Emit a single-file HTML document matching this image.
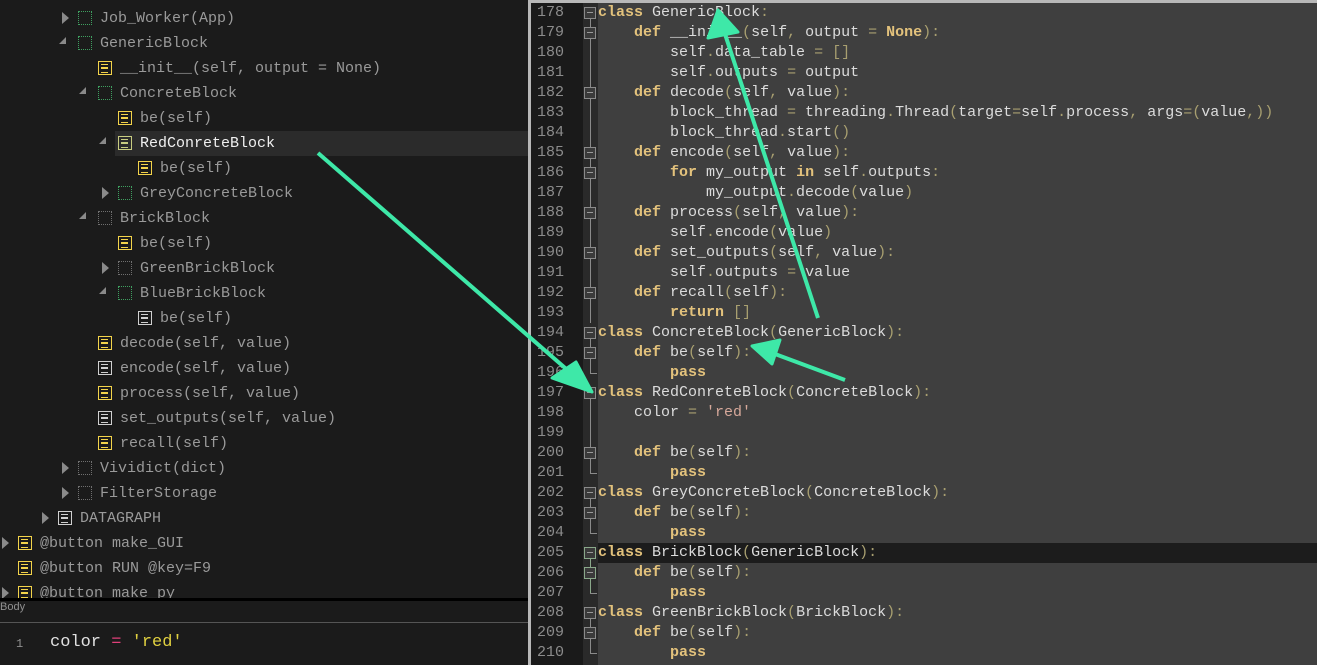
<!DOCTYPE html>
<html><head><meta charset="utf-8"><style>
*{margin:0;padding:0;box-sizing:border-box}
body{width:1317px;height:665px;overflow:hidden;background:#1b1b1b;position:relative;font-family:"Liberation Mono",monospace}
.left{position:absolute;left:0;top:0;width:528px;height:599px;background:#1b1b1b;overflow:hidden}
.row{position:absolute;height:25px;line-height:25px;font-size:15px;color:#9a9a9a;white-space:pre}
.sel{position:absolute;left:115px;top:131px;width:413px;height:25px;background:#2b2b2b}
.ic{position:absolute;width:14px;height:14px;margin:-1px 0 0 -1px}
.y,.o,.w{border:1.5px solid var(--c)}
.y{--c:#f2d34a}.o{--c:#c8cc80}.w{--c:#d0d0d0}
.y::before,.o::before,.w::before{content:"";position:absolute;left:2px;top:2px;width:7px;height:7px;border-top:1.5px solid var(--c);border-bottom:1.5px solid var(--c)}
.y::after,.o::after,.w::after{content:"";position:absolute;left:2px;top:5px;width:7px;height:1.5px;background:var(--c)}
.g{border:1px dotted #3fa060}
.d{border:1px dotted #707070}
.tr{position:absolute;width:0;height:0;border-top:6px solid transparent;border-bottom:6px solid transparent;border-left:7px solid #8a8a8a}
.td{position:absolute;width:0;height:0;border-left:7px solid transparent;border-bottom:7px solid #8a8a8a}
.code{position:absolute;left:531px;top:2px;width:786px;height:663px;background:#3f3f3f}
.topb{position:absolute;left:528px;top:0;width:789px;height:3px;background:#b8b8b8}
.lb{position:absolute;left:528px;top:0;width:3px;height:665px;background:#b8b8b8}
.nums{position:absolute;left:531px;top:2px;width:52px;height:663px;background:#1a1a1a}
.gut{position:absolute;left:583px;top:2px;width:15px;height:663px;background:#2a2a2a}
.ln{position:absolute;left:537px;font-size:15px;color:#8c8c8c;height:20px;line-height:20px}
.cl{position:absolute;left:598px;font-size:15px;color:#dcdcdc;height:20px;line-height:20px;white-space:pre}
.k{color:#e3c27c;font-weight:bold}
.p{color:#a89f70}
.s{color:#d6a89a}
.fb{position:absolute;left:584px;width:12px;height:12px;border:1px solid #8a8a8a;background:#3a3a3a}
.fb::after{content:"";position:absolute;left:2px;top:4px;width:6px;height:1px;background:#9a9a9a}
.fl{position:absolute;left:590px;width:1px;background:#8a8a8a}
.fe{position:absolute;left:590px;width:7px;height:1px;background:#8a8a8a}
</style></head><body>
<div class="left">
<div class="sel"></div>
<div class="tr" style="left:62px;top:12px"></div><div class="ic g" style="left:79px;top:12px"></div><div class="row" style="left:100px;top:6px">Job_Worker(App)</div>
<div class="td" style="left:59px;top:37px"></div><div class="ic g" style="left:79px;top:37px"></div><div class="row" style="left:100px;top:31px">GenericBlock</div>
<div class="ic y" style="left:99px;top:62px"></div><div class="row" style="left:120px;top:56px">__init__(self, output = None)</div>
<div class="td" style="left:79px;top:87px"></div><div class="ic g" style="left:99px;top:87px"></div><div class="row" style="left:120px;top:81px">ConcreteBlock</div>
<div class="ic y" style="left:119px;top:112px"></div><div class="row" style="left:140px;top:106px">be(self)</div>
<div class="td" style="left:99px;top:137px"></div><div class="ic o" style="left:119px;top:137px"></div><div class="row" style="left:140px;top:131px;color:#f0f0f0">RedConreteBlock</div>
<div class="ic y" style="left:139px;top:162px"></div><div class="row" style="left:160px;top:156px">be(self)</div>
<div class="tr" style="left:102px;top:187px"></div><div class="ic g" style="left:119px;top:187px"></div><div class="row" style="left:140px;top:181px">GreyConcreteBlock</div>
<div class="td" style="left:79px;top:212px"></div><div class="ic d" style="left:99px;top:212px"></div><div class="row" style="left:120px;top:206px">BrickBlock</div>
<div class="ic y" style="left:119px;top:237px"></div><div class="row" style="left:140px;top:231px">be(self)</div>
<div class="tr" style="left:102px;top:262px"></div><div class="ic d" style="left:119px;top:262px"></div><div class="row" style="left:140px;top:256px">GreenBrickBlock</div>
<div class="td" style="left:99px;top:287px"></div><div class="ic g" style="left:119px;top:287px"></div><div class="row" style="left:140px;top:281px">BlueBrickBlock</div>
<div class="ic w" style="left:139px;top:312px"></div><div class="row" style="left:160px;top:306px">be(self)</div>
<div class="ic y" style="left:99px;top:337px"></div><div class="row" style="left:120px;top:331px">decode(self, value)</div>
<div class="ic w" style="left:99px;top:362px"></div><div class="row" style="left:120px;top:356px">encode(self, value)</div>
<div class="ic y" style="left:99px;top:387px"></div><div class="row" style="left:120px;top:381px">process(self, value)</div>
<div class="ic w" style="left:99px;top:412px"></div><div class="row" style="left:120px;top:406px">set_outputs(self, value)</div>
<div class="ic y" style="left:99px;top:437px"></div><div class="row" style="left:120px;top:431px">recall(self)</div>
<div class="tr" style="left:62px;top:462px"></div><div class="ic d" style="left:79px;top:462px"></div><div class="row" style="left:100px;top:456px">Vividict(dict)</div>
<div class="tr" style="left:62px;top:487px"></div><div class="ic d" style="left:79px;top:487px"></div><div class="row" style="left:100px;top:481px">FilterStorage</div>
<div class="tr" style="left:42px;top:512px"></div><div class="ic w" style="left:59px;top:512px"></div><div class="row" style="left:80px;top:506px">DATAGRAPH</div>
<div class="tr" style="left:2px;top:537px"></div><div class="ic y" style="left:19px;top:537px"></div><div class="row" style="left:40px;top:531px">@button make_GUI</div>
<div class="ic y" style="left:19px;top:562px"></div><div class="row" style="left:40px;top:556px">@button RUN @key=F9</div>
<div class="tr" style="left:2px;top:587px"></div><div class="ic y" style="left:19px;top:587px"></div><div class="row" style="left:40px;top:581px">@button make_py</div>
</div>
<div style="position:absolute;left:0;top:598px;width:528px;height:3px;background:#000"></div>
<div style="position:absolute;left:0;top:601px;font-family:'Liberation Sans',sans-serif;font-size:11px;color:#909090">Body</div>
<div style="position:absolute;left:0;top:622px;width:528px;height:1px;background:#555"></div>
<div style="position:absolute;left:16px;top:637px;font-size:12px;color:#909090">1</div>
<div style="position:absolute;left:50px;top:633px;font-size:17px;color:#e0e0e0;white-space:pre">color <span style="color:#e0407a">=</span> <span style="color:#e0d040">'red'</span></div>

<div class="code"></div>
<div style="position:absolute;left:598px;top:543px;width:719px;height:20px;background:#1c1c1c"></div>
<div class="nums"></div><div class="gut"></div>
<div class="topb"></div><div class="lb"></div>

<div class="ln" style="top:3px">178</div><div class="ln" style="top:23px">179</div><div class="ln" style="top:43px">180</div><div class="ln" style="top:63px">181</div><div class="ln" style="top:83px">182</div><div class="ln" style="top:103px">183</div><div class="ln" style="top:123px">184</div><div class="ln" style="top:143px">185</div><div class="ln" style="top:163px">186</div><div class="ln" style="top:183px">187</div><div class="ln" style="top:203px">188</div><div class="ln" style="top:223px">189</div><div class="ln" style="top:243px">190</div><div class="ln" style="top:263px">191</div><div class="ln" style="top:283px">192</div><div class="ln" style="top:303px">193</div><div class="ln" style="top:323px">194</div><div class="ln" style="top:343px">195</div><div class="ln" style="top:363px">196</div><div class="ln" style="top:383px">197</div><div class="ln" style="top:403px">198</div><div class="ln" style="top:423px">199</div><div class="ln" style="top:443px">200</div><div class="ln" style="top:463px">201</div><div class="ln" style="top:483px">202</div><div class="ln" style="top:503px">203</div><div class="ln" style="top:523px">204</div><div class="ln" style="top:543px">205</div><div class="ln" style="top:563px">206</div><div class="ln" style="top:583px">207</div><div class="ln" style="top:603px">208</div><div class="ln" style="top:623px">209</div><div class="ln" style="top:643px">210</div>

<div class="fl" style="top:13px;height:310px"></div>
<div class="fl" style="top:333px;height:40px"></div><div class="fe" style="top:373px"></div>
<div class="fl" style="top:393px;height:80px"></div><div class="fe" style="top:473px"></div>
<div class="fl" style="top:493px;height:40px"></div><div class="fe" style="top:533px"></div>
<div class="fl" style="top:553px;height:40px;background:#8aa88a"></div><div class="fe" style="top:593px"></div>
<div class="fl" style="top:613px;height:40px"></div><div class="fe" style="top:653px"></div>
<div class="fb" style="top:7px"></div><div class="fb" style="top:27px"></div><div class="fb" style="top:87px"></div><div class="fb" style="top:147px"></div><div class="fb" style="top:167px"></div><div class="fb" style="top:207px"></div><div class="fb" style="top:247px"></div><div class="fb" style="top:287px"></div><div class="fb" style="top:327px"></div><div class="fb" style="top:347px"></div><div class="fb" style="top:387px"></div><div class="fb" style="top:447px"></div><div class="fb" style="top:487px"></div><div class="fb" style="top:507px"></div><div class="fb" style="top:547px;border-color:#8aa88a"></div><div class="fb" style="top:567px;border-color:#8aa88a"></div><div class="fb" style="top:607px"></div><div class="fb" style="top:627px"></div>

<div class="cl" style="top:3px"><span class="k">class</span> GenericBlock<span class="p">:</span></div>
<div class="cl" style="top:23px">    <span class="k">def</span> __init__<span class="p">(</span>self<span class="p">,</span> output <span class="p">=</span> <span class="k">None</span><span class="p">):</span></div>
<div class="cl" style="top:43px">        self<span class="p">.</span>data_table <span class="p">=</span> <span class="p">[]</span></div>
<div class="cl" style="top:63px">        self<span class="p">.</span>outputs <span class="p">=</span> output</div>
<div class="cl" style="top:83px">    <span class="k">def</span> decode<span class="p">(</span>self<span class="p">,</span> value<span class="p">):</span></div>
<div class="cl" style="top:103px">        block_thread <span class="p">=</span> threading<span class="p">.</span>Thread<span class="p">(</span>target<span class="p">=</span>self<span class="p">.</span>process<span class="p">,</span> args<span class="p">=(</span>value<span class="p">,))</span></div>
<div class="cl" style="top:123px">        block_thread<span class="p">.</span>start<span class="p">()</span></div>
<div class="cl" style="top:143px">    <span class="k">def</span> encode<span class="p">(</span>self<span class="p">,</span> value<span class="p">):</span></div>
<div class="cl" style="top:163px">        <span class="k">for</span> my_output <span class="k">in</span> self<span class="p">.</span>outputs<span class="p">:</span></div>
<div class="cl" style="top:183px">            my_output<span class="p">.</span>decode<span class="p">(</span>value<span class="p">)</span></div>
<div class="cl" style="top:203px">    <span class="k">def</span> process<span class="p">(</span>self<span class="p">,</span> value<span class="p">):</span></div>
<div class="cl" style="top:223px">        self<span class="p">.</span>encode<span class="p">(</span>value<span class="p">)</span></div>
<div class="cl" style="top:243px">    <span class="k">def</span> set_outputs<span class="p">(</span>self<span class="p">,</span> value<span class="p">):</span></div>
<div class="cl" style="top:263px">        self<span class="p">.</span>outputs <span class="p">=</span> value</div>
<div class="cl" style="top:283px">    <span class="k">def</span> recall<span class="p">(</span>self<span class="p">):</span></div>
<div class="cl" style="top:303px">        <span class="k">return</span> <span class="p">[]</span></div>
<div class="cl" style="top:323px"><span class="k">class</span> ConcreteBlock<span class="p">(</span>GenericBlock<span class="p">):</span></div>
<div class="cl" style="top:343px">    <span class="k">def</span> be<span class="p">(</span>self<span class="p">):</span></div>
<div class="cl" style="top:363px">        <span class="k">pass</span></div>
<div class="cl" style="top:383px"><span class="k">class</span> RedConreteBlock<span class="p">(</span>ConcreteBlock<span class="p">):</span></div>
<div class="cl" style="top:403px">    color <span class="p">=</span> <span class="s">'red'</span></div>
<div class="cl" style="top:443px">    <span class="k">def</span> be<span class="p">(</span>self<span class="p">):</span></div>
<div class="cl" style="top:463px">        <span class="k">pass</span></div>
<div class="cl" style="top:483px"><span class="k">class</span> GreyConcreteBlock<span class="p">(</span>ConcreteBlock<span class="p">):</span></div>
<div class="cl" style="top:503px">    <span class="k">def</span> be<span class="p">(</span>self<span class="p">):</span></div>
<div class="cl" style="top:523px">        <span class="k">pass</span></div>
<div class="cl" style="top:543px"><span class="k">class</span> BrickBlock<span class="p">(</span>GenericBlock<span class="p">):</span></div>
<div class="cl" style="top:563px">    <span class="k">def</span> be<span class="p">(</span>self<span class="p">):</span></div>
<div class="cl" style="top:583px">        <span class="k">pass</span></div>
<div class="cl" style="top:603px"><span class="k">class</span> GreenBrickBlock<span class="p">(</span>BrickBlock<span class="p">):</span></div>
<div class="cl" style="top:623px">    <span class="k">def</span> be<span class="p">(</span>self<span class="p">):</span></div>
<div class="cl" style="top:643px">        <span class="k">pass</span></div>

<svg style="position:absolute;left:0;top:0" width="1317" height="665">
<g fill="#3ee8a8" stroke="#3ee8a8" stroke-linejoin="round">
<line x1="318" y1="153" x2="572" y2="374" stroke-width="4"/>
<polygon points="592,392 552,378 576,362 " stroke-width="3"/>
<line x1="818" y1="318" x2="725" y2="34" stroke-width="4"/>
<polygon points="718,10 708,38 738,32" stroke-width="3"/>
<line x1="845" y1="380" x2="775" y2="354" stroke-width="4"/>
<polygon points="752,346 780,340 772,364" stroke-width="3"/>
</g>
</svg>
</body></html>
